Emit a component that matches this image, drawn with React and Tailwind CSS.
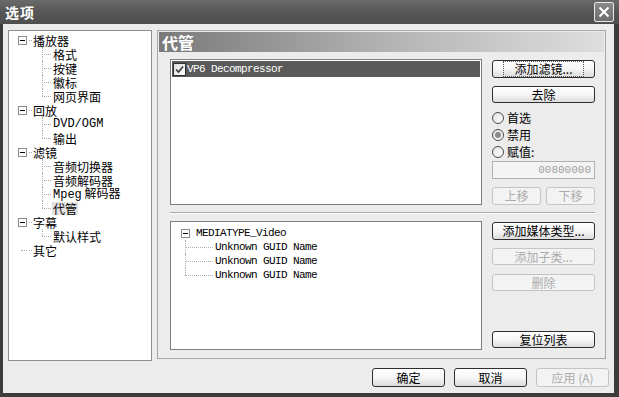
import React from 'react';

const cjk = { fontFamily: '"Noto Sans CJK SC", "Liberation Sans", sans-serif' };
const mono = { fontFamily: '"Liberation Mono", "Noto Sans CJK SC", monospace' };

const Btn = ({ children, disabled, focus, className = '' }) => (
  <div
    className={`flex items-center justify-center rounded-[3px] border text-[12px] leading-none ${
      disabled
        ? 'border-[#c4c4c4] bg-[#f3f3f3] text-[#acacac]'
        : 'border-[#2e2e2e] bg-gradient-to-b from-white via-[#f6f6f6] to-[#dcdcdc] text-black'
    } ${className}`}
  >
    <span className={focus ? 'border border-dotted border-[#555] px-[10px] py-[1px]' : ''}>{children}</span>
  </div>
);

const Radio = ({ label, checked }) => (
  <div className="flex items-center h-[17px] gap-[3px] text-[12px] text-black">
    <span className="flex items-center justify-center w-[12px] h-[12px] rounded-full border border-[#4a4a4a] bg-gradient-to-br from-[#e2e2e2] to-white">
      {checked && <span className="w-[6px] h-[6px] rounded-full bg-[#8a8a8a]" />}
    </span>
    <span>{label}</span>
  </div>
);

const ExpandBox = () => (
  <span className="relative flex items-center justify-center w-[9px] h-[9px] border border-[#8c8c8c] bg-white">
    <span className="w-[5px] h-[1px] bg-black" />
  </span>
);

const tree = [
  { label: '播放器', open: true },
  { label: '格式', child: true },
  { label: '按键', child: true },
  { label: '徽标', child: true },
  { label: '网页界面', child: true, last: true },
  { label: '回放', open: true },
  { label: 'DVD/OGM', child: true, mono: true },
  { label: '输出', child: true, last: true },
  { label: '滤镜', open: true },
  { label: '音频切换器', child: true },
  { label: '音频解码器', child: true },
  { label: 'Mpeg 解码器', child: true, mpeg: true },
  { label: '代管', child: true, last: true, selected: true },
  { label: '字幕', open: true },
  { label: '默认样式', child: true, last: true },
  { label: '其它' },
];

const TreeRow = ({ item }) => {
  if (item.child) {
    return (
      <div className="relative flex items-center h-[14px] pl-[43px]">
        <span className={`absolute left-[33px] top-0 w-0 border-l border-dotted border-[#a8a8a8] ${item.last ? 'h-[7px]' : 'h-[14px]'}`} />
        <span className="absolute left-[33px] top-[7px] w-[9px] border-t border-dotted border-[#a8a8a8]" />
        <span
          className={`text-[12px] leading-[13px] text-black px-[1px] ${item.selected ? 'bg-[#e2e2e2]' : ''}`}
          style={item.mono ? mono : cjk}
        >
          {item.mpeg ? (
            <>
              <span style={mono}>Mpeg</span> 解码器
            </>
          ) : (
            item.label
          )}
        </span>
      </div>
    );
  }
  return (
    <div className="relative flex items-center h-[14px] pl-[9px]">
      {item.open ? (
        <ExpandBox />
      ) : (
        <span className="w-[9px] h-[9px] flex items-center">
          <span className="ml-[3px] w-[6px] border-t border-dotted border-[#a8a8a8]" />
        </span>
      )}
      <span className="ml-[2px] w-[3px] border-t border-dotted border-[#a8a8a8]" />
      <span className="ml-[1px] text-[12px] leading-[13px] text-black" style={cjk}>
        {item.label}
      </span>
    </div>
  );
};

const Check = () => (
  <span className="flex items-center justify-center w-[13px] h-[13px] border border-[#2f2f2f] bg-gradient-to-br from-[#dcdcdc] to-white">
    <svg width="9" height="9" viewBox="0 0 9 9">
      <path d="M1 4.5 L3.5 7 L8 1.5" fill="none" stroke="#3a3a3a" strokeWidth="1.6" />
    </svg>
  </span>
);

export default function App() {
  return (
    <div className="w-[619px] h-[397px] flex flex-col bg-[#3c3c3c] select-none" style={cjk}>
      {/* Title bar */}
      <div className="h-[24px] flex items-center justify-between pl-[5px] pr-[5px] bg-gradient-to-b from-[#6a6a6a] via-[#565656] to-[#4e4e4e]">
        <span className="text-white font-bold text-[14px] leading-none tracking-[1px]">选项</span>
        <span className="flex items-center justify-center w-[20px] h-[20px] rounded-[2px] border border-[#e8e8e8] bg-gradient-to-b from-[#8a8a8a] to-[#6e6e6e]">
          <svg width="12" height="12" viewBox="0 0 12 12">
            <path d="M1.5 1.5 L10.5 10.5 M10.5 1.5 L1.5 10.5" stroke="white" strokeWidth="2" />
          </svg>
        </span>
      </div>

      {/* Body */}
      <div className="flex-1 ml-[3px] mr-[5px] mb-[4px] bg-[#ececec] flex flex-col pt-[6px] pl-[5px] pr-[8px]">
        <div className="flex gap-[5px] h-[331px]">
          {/* Tree */}
          <div className="w-[146px] h-full bg-white border border-[#8e8e8e] pt-[2px]">
            {tree.map((t) => (
              <TreeRow key={t.label} item={t} />
            ))}
          </div>

          {/* Page */}
          <div className="flex-1 h-[329px] border border-[#a6a6a6] flex flex-col">
            <div className="mx-[1px] mt-[1px] h-[20px] bg-gradient-to-r from-[#7a7a7a] via-[#b2b2b2] to-[#dedede] flex items-center pl-[3px]">
              <span className="text-white font-bold text-[16px] leading-none">代管</span>
            </div>

            <div className="pl-[12px] pr-[10px] pt-[7px] flex flex-col">
              {/* Row 1 */}
              <div className="flex gap-[10px]">
                <div className="w-[312px] h-[146px] bg-white border border-[#7e7e7e] p-[1px]">
                  <div className="h-[16px] bg-[#5a5a5a] flex items-center pl-[1px]">
                    <Check />
                    <span className="ml-[1px] text-white text-[11px] tracking-[-0.6px] leading-none" style={mono}>
                      VP6 Decompressor
                    </span>
                  </div>
                </div>
                <div className="w-[103px] flex flex-col pt-[1px]">
                  <Btn focus className="h-[18px]">添加滤镜...</Btn>
                  <Btn className="h-[17px] mt-[8px]">去除</Btn>
                  <div className="mt-[6px] flex flex-col">
                    <Radio label="首选" />
                    <Radio label="禁用" checked />
                    <Radio label="赋值:" />
                  </div>
                  <div className="mt-[1px] h-[18px] border border-[#b0b0b0] bg-[#f4f4f4] flex items-center justify-end pr-[3px] text-[11px] text-[#a0a0a0]" style={mono}>
                    00800000
                  </div>
                  <div className="mt-[8px] flex gap-[5px]">
                    <Btn disabled className="flex-1 h-[18px]">上移</Btn>
                    <Btn disabled className="flex-1 h-[18px]">下移</Btn>
                  </div>
                </div>
              </div>

              {/* Separator */}
              <div className="mt-[7px] border-t border-[#a8a8a8] border-b border-b-white" />

              {/* Row 2 */}
              <div className="flex gap-[10px] mt-[7px]">
                <div className="w-[312px] h-[129px] bg-white border border-[#7e7e7e] pt-[4px]">
                  <div className="relative flex items-center h-[14px] pl-[10px]">
                    <ExpandBox />
                    <span className="ml-[6px] text-black text-[11px] tracking-[-0.6px] leading-none" style={mono}>
                      MEDIATYPE_Video
                    </span>
                  </div>
                  {[0, 1, 2].map((i) => (
                    <div key={i} className="relative flex items-center h-[14px] pl-[44px]">
                      <span className={`absolute left-[14px] top-0 w-0 border-l border-dotted border-[#b0b0b0] ${i === 2 ? 'h-[7px]' : 'h-[14px]'}`} />
                      <span className="absolute left-[14px] top-[7px] w-[28px] border-t border-dotted border-[#b0b0b0]" />
                      <span className="text-black text-[11px] tracking-[-0.6px] leading-none" style={mono}>
                        Unknown GUID Name
                      </span>
                    </div>
                  ))}
                </div>
                <div className="w-[103px] flex flex-col pt-[1px]">
                  <Btn className="h-[18px]">添加媒体类型...</Btn>
                  <Btn disabled className="h-[17px] mt-[8px]">添加子类...</Btn>
                  <Btn disabled className="h-[17px] mt-[9px]">删除</Btn>
                  <Btn className="h-[17px] mt-[40px]">复位列表</Btn>
                </div>
              </div>
            </div>
          </div>
        </div>

        {/* Bottom buttons */}
        <div className="flex justify-end gap-[9px] mt-[7px]">
          <Btn className="w-[73px] h-[19px]">确定</Btn>
          <Btn className="w-[73px] h-[19px]">取消</Btn>
          <Btn disabled className="w-[73px] h-[19px] mr-[-3px]">应用 (A)</Btn>
        </div>
      </div>
    </div>
  );
}
